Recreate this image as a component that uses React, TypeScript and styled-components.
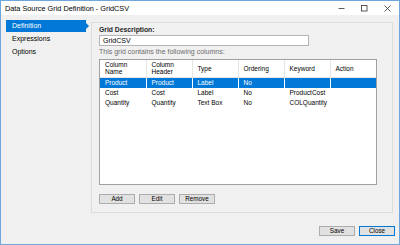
import styled, { createGlobalStyle } from "styled-components";

const GlobalStyle = createGlobalStyle`
  html, body {
    margin: 0;
    padding: 0;
    background: #ffffff;
  }
  * {
    box-sizing: border-box;
  }
`;

const Window = styled.div`
  width: 400px;
  height: 245px;
  border: 1px solid #6fa7dc;
  display: flex;
  flex-direction: column;
  font-family: "Liberation Sans", Arial, sans-serif;
  font-size: 7px;
  color: #000;
  overflow: hidden;
`;

const TitleBar = styled.div`
  height: 14px;
  background: #ffffff;
  display: flex;
  align-items: center;
  padding-left: 4px;
`;

const Title = styled.span`
  flex: 1;
  font-size: 7.3px;
`;

const TitleButton = styled.span`
  width: 23px;
  height: 14px;
  display: flex;
  align-items: center;
  justify-content: center;
`;

const Main = styled.div`
  flex: 1;
  background: #f0f0f0;
  display: flex;
  flex-direction: column;
`;

const Body = styled.div`
  display: flex;
  padding: 5px 5px 0 5px;
  height: 198px;
`;

const Nav = styled.ul`
  list-style: none;
  margin: 0;
  padding: 0;
  width: 80px;
  display: flex;
  flex-direction: column;
`;

const NavItem = styled.li<{ $active?: boolean }>`
  position: relative;
  height: 12px;
  line-height: 12px;
  padding-left: 6px;
  margin-bottom: 1px;
  background: ${({ $active }) => ($active ? "#0078d7" : "transparent")};
  color: ${({ $active }) => ($active ? "#ffffff" : "#000000")};

  ${({ $active }) =>
    $active &&
    `
    &::after {
      content: "";
      position: absolute;
      right: -3px;
      top: 3px;
      border-top: 3px solid transparent;
      border-bottom: 3px solid transparent;
      border-left: 3px solid #0078d7;
    }
  `}
`;

const Panel = styled.div`
  margin-left: 5px;
  margin-top: 2px;
  width: 302px;
  height: 191px;
  border: 1px solid #dcdcdc;
  padding: 2px 7px 0 7px;
  display: flex;
  flex-direction: column;
`;

const FieldLabel = styled.label`
  font-weight: 700;
  color: #262626;
  font-size: 6.8px;
  height: 9px;
  line-height: 9px;
`;

const TextInput = styled.div`
  width: 210px;
  height: 11px;
  border: 1px solid #b4b4b4;
  background: #ffffff;
  padding-left: 3px;
  line-height: 9px;
  margin-top: 1px;
`;

const Hint = styled.div`
  color: #6d6d6d;
  margin-top: 1px;
  height: 10px;
  line-height: 10px;
`;

const GridBox = styled.div`
  width: 278px;
  height: 126px;
  margin-top: 2px;
  border: 1px solid #a0a0a0;
  background: #ffffff;
`;

const Table = styled.table`
  border-collapse: collapse;
  table-layout: fixed;
  width: 100%;
  font-size: 6.5px;
`;

const HeadCell = styled.th`
  width: 46px;
  height: 17px;
  text-align: left;
  font-weight: 400;
  padding: 0 0 0 5px;
  line-height: 7px;
  border-right: 1px solid #e5e5e5;
  border-bottom: 1px solid #e5e5e5;
  &:last-child {
    border-right: none;
  }
`;

const Row = styled.tr<{ $selected?: boolean }>`
  background: ${({ $selected }) => ($selected ? "#0078d7" : "transparent")};
  color: ${({ $selected }) => ($selected ? "#ffffff" : "#000000")};
`;

const Cell = styled.td<{ $selected?: boolean }>`
  height: 10px;
  padding: 0 0 0 5px;
  line-height: 10px;
  white-space: nowrap;
  overflow: hidden;
  border-right: 1px solid ${({ $selected }) => ($selected ? "#ffffff" : "transparent")};
  &:last-child {
    border-right: none;
  }
`;

const ButtonRow = styled.div<{ $align?: "start" | "end" }>`
  display: flex;
  gap: 4px;
  justify-content: ${({ $align }) => ($align === "end" ? "flex-end" : "flex-start")};
`;

const PanelButtons = styled(ButtonRow)`
  margin-top: 9px;
`;

const Footer = styled(ButtonRow)`
  padding: 13px 4px 0 0;
`;

const Button = styled.div<{ $default?: boolean }>`
  width: 36px;
  height: 10px;
  line-height: 8px;
  text-align: center;
  font-size: 6.3px;
  background: #e1e1e1;
  border: 1px solid ${({ $default }) => ($default ? "#0078d7" : "#adadad")};
`;

const columns = [
  ["Column", "Name"],
  ["Column", "Header"],
  ["Type"],
  ["Ordering"],
  ["Keyword"],
  ["Action"],
];

const rows = [
  ["Product", "Product", "Label", "No", "", ""],
  ["Cost", "Cost", "Label", "No", "ProductCost", ""],
  ["Quantity", "Quantity", "Text Box", "No", "COLQuantity", ""],
];

export default function App() {
  return (
    <>
      <GlobalStyle />
      <Window>
        <TitleBar>
          <Title>Data Source Grid Definition - GridCSV</Title>
          <TitleButton>
            <svg width="7" height="7" viewBox="0 0 7 7">
              <line x1="0.5" y1="3.5" x2="6.5" y2="3.5" stroke="#333" strokeWidth="0.8" />
            </svg>
          </TitleButton>
          <TitleButton>
            <svg width="7" height="7" viewBox="0 0 7 7">
              <rect x="0.5" y="0.5" width="5.5" height="5.5" fill="none" stroke="#333" strokeWidth="0.8" />
            </svg>
          </TitleButton>
          <TitleButton>
            <svg width="7" height="7" viewBox="0 0 7 7">
              <path d="M0.5 0.5 L6.5 6.5 M6.5 0.5 L0.5 6.5" stroke="#333" strokeWidth="0.8" />
            </svg>
          </TitleButton>
        </TitleBar>
        <Main>
          <Body>
            <Nav>
              <NavItem $active>Definition</NavItem>
              <NavItem>Expressions</NavItem>
              <NavItem>Options</NavItem>
            </Nav>
            <Panel>
              <FieldLabel>Grid Description:</FieldLabel>
              <TextInput>GridCSV</TextInput>
              <Hint>This grid contains the following columns:</Hint>
              <GridBox>
                <Table>
                  <thead>
                    <tr>
                      {columns.map((c, idx) => (
                        <HeadCell key={idx}>
                          {c.map((line, i) => (
                            <div key={i}>{line}</div>
                          ))}
                        </HeadCell>
                      ))}
                    </tr>
                  </thead>
                  <tbody>
                    {rows.map((r, idx) => (
                      <Row key={idx} $selected={idx === 0}>
                        {r.map((v, i) => (
                          <Cell key={i} $selected={idx === 0}>
                            {v}
                          </Cell>
                        ))}
                      </Row>
                    ))}
                  </tbody>
                </Table>
              </GridBox>
              <PanelButtons>
                <Button>Add</Button>
                <Button>Edit</Button>
                <Button>Remove</Button>
              </PanelButtons>
            </Panel>
          </Body>
          <Footer $align="end">
            <Button>Save</Button>
            <Button $default>Close</Button>
          </Footer>
        </Main>
      </Window>
    </>
  );
}
